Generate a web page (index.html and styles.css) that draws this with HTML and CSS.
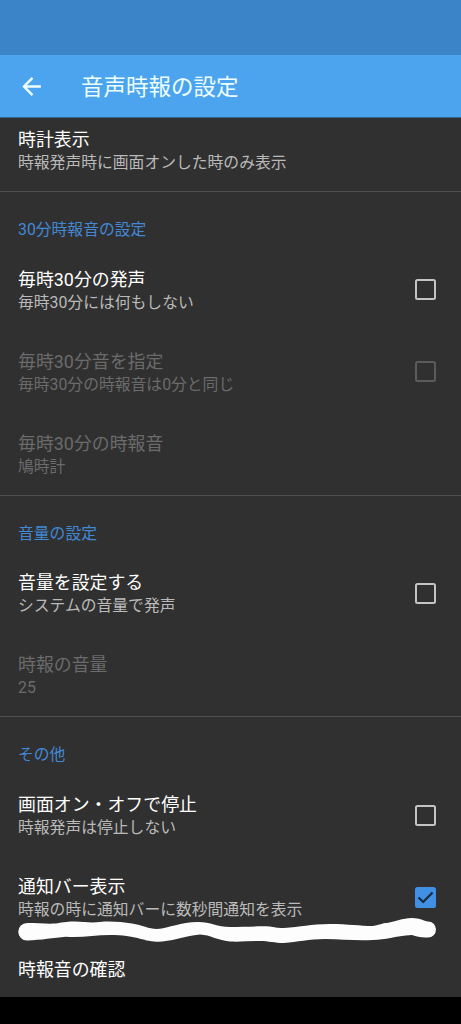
FILE: index.html
```html
<!DOCTYPE html>
<html lang="ja">
<head>
<meta charset="utf-8">
<title>音声時報の設定</title>
<link rel="stylesheet" href="styles.css">
</head>
<body>
<div class="screen">
  <div class="status-bar"></div>
  <header class="app-bar">
    <svg class="back" viewBox="0 0 24 24"><path d="M20 12H4.500M12 3.800L3.800 12l8.200 8.200" fill="none" stroke="currentColor" stroke-width="2.300"/></svg>
    <h1 class="app-title">音声時報の設定</h1>
  </header>
  <main class="settings">
    <section class="group group-scrolled">
      <div class="row"><div class="label"><div class="title">時計表示</div><div class="summary">時報発声時に画面オンした時のみ表示</div></div></div>
    </section>
    <section class="group">
      <h2 class="heading">30分時報音の設定</h2>
      <div class="row"><div class="label"><div class="title">毎時30分の発声</div><div class="summary">毎時30分には何もしない</div></div><span class="checkbox"></span></div>
      <div class="row disabled"><div class="label"><div class="title">毎時30分音を指定</div><div class="summary">毎時30分の時報音は0分と同じ</div></div><span class="checkbox"></span></div>
      <div class="row disabled"><div class="label"><div class="title">毎時30分の時報音</div><div class="summary">鳩時計</div></div></div>
    </section>
    <section class="group">
      <h2 class="heading">音量の設定</h2>
      <div class="row"><div class="label"><div class="title">音量を設定する</div><div class="summary">システムの音量で発声</div></div><span class="checkbox"></span></div>
      <div class="row disabled"><div class="label"><div class="title">時報の音量</div><div class="summary">25</div></div></div>
    </section>
    <section class="group">
      <h2 class="heading">その他</h2>
      <div class="row"><div class="label"><div class="title">画面オン・オフで停止</div><div class="summary">時報発声は停止しない</div></div><span class="checkbox"></span></div>
      <div class="row"><div class="label"><div class="title">通知バー表示</div><div class="summary">時報の時に通知バーに数秒間通知を表示</div></div><span class="checkbox checked"><svg viewBox="0 0 21 21"><path d="M3.500 10.500l4.700 4.500 9.300-9.500" fill="none" stroke="currentColor" stroke-width="2.300"/></svg></span>
        <svg class="marker" viewBox="0 0 461 30"><path d="M27 5C38 5 46 6 56 5.500C64 4 69 3.500 75 3.500C84 4 92 5 100 4C110 3 122 4 132 5.500C143 7 148 11 157 11C170 10 180 4 198 4C211 4 217 9 230 9C244 9 257 8 270 8.500C277 10 281 10 284 10C301 9 310 6 330 6C348 6 360 8 373 8C380 7 382 5 387 5C397 3 401 0.500 412 0C420 0 424 3 428 3.500A8 8 0 0 1 428 19.500C421 20 417 18.500 412 17C394 18 386 22 373 22C356 23 342 21 325 21C309 21 297 24 284 25C274 25 269 23 260 23C250 23 240 24 230 23.500C216 22 211 17 200 16.500C184 18 170 24 157 23.800C141 23 137 17 110 17C95 17 82 20 66 18.800C53 20 42 22 27 22.500A8.500 8.500 0 0 1 27 5Z" fill="#fdfdfd"/></svg>
      </div>
      <div class="row single"><div class="label"><div class="title">時報音の確認</div></div></div>
    </section>
  </main>
  <div class="nav-bar"></div>
</div>
</body>
</html>
```
FILE: styles.css
```css
* { box-sizing: border-box; }
body { margin: 0; background: #000; font-family: Roboto, "Noto Sans CJK JP", sans-serif; }
.screen { display: flex; flex-direction: column; width: 461px; height: 1024px; overflow: hidden; }
.status-bar { flex: 0 0 55px; background: #3a84c7; }
.app-bar { flex: 0 0 63px; display: flex; align-items: center; gap: 36px; padding-left: 20px; background: #4ba4ed; color: #edffff; border-bottom: 1px solid #35658d; }
.back { width: 25px; height: 25px; }
.app-title { margin: 0; padding-top: 1px; font-size: 22.5px; line-height: 32px; font-weight: 400; }
.settings { flex: 0 0 879px; overflow: hidden; background: #303030; }
.nav-bar { flex: 1; background: #000; }
.group { border-bottom: 1px solid #505050; }
.group:last-child { border-bottom: 0; }
.group-scrolled { margin-top: -9px; }
.heading { margin: 0; height: 56.700px; padding: 26px 18px 0; color: #4288d5; font-size: 15.800px; line-height: 24px; font-weight: 400; }
.row { position: relative; display: flex; align-items: center; justify-content: space-between; height: 82px; padding: 0 25px 0 18px; }
.label { padding-top: 2px; }
.title { color: #fff; font-size: 17.900px; line-height: 23px; }
.summary { color: #bababa; font-size: 15.800px; line-height: 23px; }
.disabled .title { color: #6b6b6b; }
.disabled .summary { color: #6b6b6b; }
.single { height: 60px; }
.checkbox { width: 21px; height: 21px; border: 2px solid #c4c4c4; border-radius: 2.500px; }
.disabled .checkbox { border-color: #5b5b5b; }
.checked { border: 0; background: #4190e3; color: #182b40; }
.checked svg { display: block; width: 21px; height: 21px; }
.marker { position: absolute; left: 0; top: 62px; width: 461px; height: 30px; overflow: visible; z-index: 1; }
```
